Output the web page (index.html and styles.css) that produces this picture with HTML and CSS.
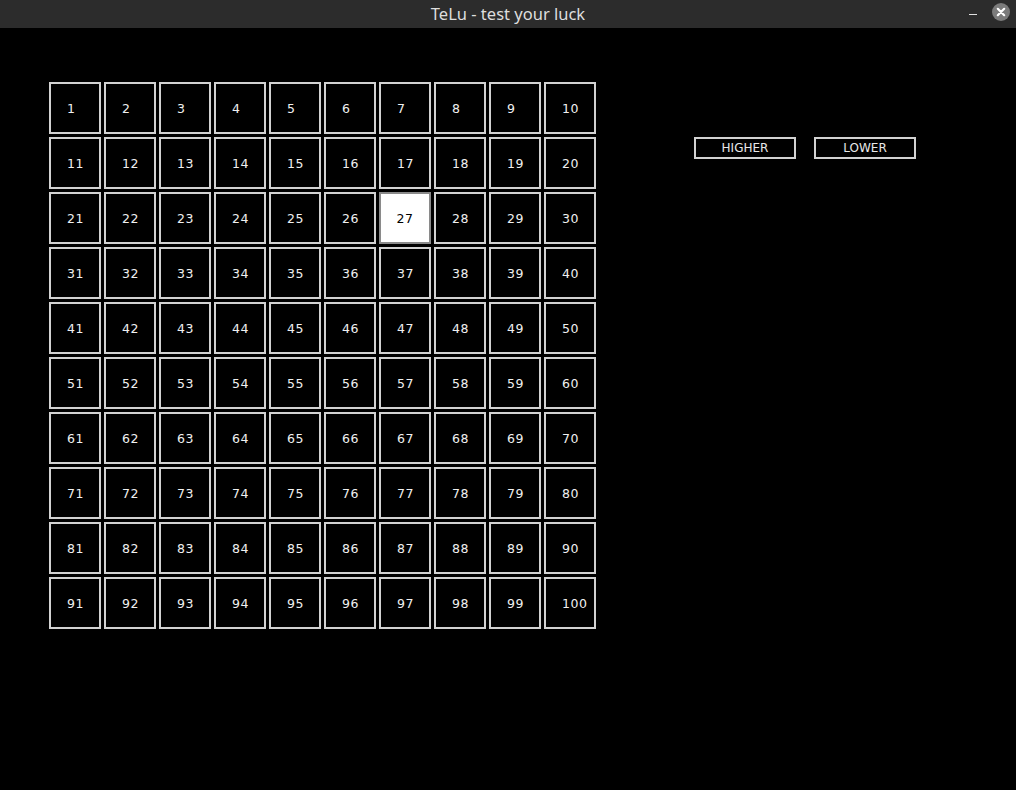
FILE: index.html
```html
<!DOCTYPE html>
<html lang="en">
<head>
    <meta charset="UTF-8">
    <title>TeLu - test your luck</title>
    <link rel="stylesheet" href="styles.css">
</head>
<body>
    <div class="titlebar">
        <span class="title">TeLu - test your luck</span>
        <span class="minimize"></span>
        <span class="close">
            <svg width="18" height="18" viewBox="0 0 18 18">
                <circle cx="9" cy="9" r="9" fill="#7b7b7b"/>
                <path d="M5.8 5.8 L12.2 12.2 M12.2 5.8 L5.8 12.2" stroke="#fff" stroke-width="2.2" stroke-linecap="round"/>
            </svg>
        </span>
    </div>
    <div class="content">
        <div class="grid" id="grid"></div>
        <div class="controls">
            <button class="btn">HIGHER</button>
            <button class="btn">LOWER</button>
        </div>
    </div>
    <script>
        var grid = document.getElementById('grid');
        for (var i = 1; i <= 100; i++) {
            var cell = document.createElement('div');
            cell.className = 'cell' + (i === 27 ? ' selected' : '');
            cell.textContent = i;
            grid.appendChild(cell);
        }
    </script>
</body>
</html>
```

FILE: styles.css
```css
body {
    margin: 0;
    padding: 0;
    background-color: #000;
    font-family: "DejaVu Sans", sans-serif;
    width: 1016px;
    height: 790px;
    overflow: hidden;
}
.titlebar {
    height: 28px;
    background-color: #2c2c2c;
    position: relative;
    display: flex;
    align-items: center;
    justify-content: center;
}
.title {
    font-family: "Noto Sans", sans-serif;
    font-size: 16.5px;
    color: #dedede;
    margin-top: -2px;
}
.minimize {
    position: absolute;
    left: 969px;
    top: 14px;
    width: 8px;
    height: 1px;
    background-color: #e0e0e0;
}
.close {
    position: absolute;
    left: 992px;
    top: 3px;
    width: 18px;
    height: 18px;
}
.content {
    display: flex;
    padding: 54px 0 0 49px;
}
.grid {
    display: grid;
    grid-template-columns: repeat(10, 52px);
    grid-auto-rows: 52px;
    gap: 3px;
}
.cell {
    box-sizing: border-box;
    border: 2px solid #d2d2d2;
    color: #f0f0f0;
    font-size: 12.5px;
    letter-spacing: 0.6px;
    display: flex;
    align-items: center;
    padding-left: 16px;
    padding-top: 1px;
}
.cell.selected {
    background-color: #fff;
    border-color: #8a8a8a;
    color: #000;
    justify-content: center;
    padding-left: 0;
}
.controls {
    display: flex;
    gap: 18px;
    margin: 55px 0 0 98px;
    align-items: flex-start;
}
.btn {
    box-sizing: border-box;
    width: 102px;
    height: 22px;
    background-color: #000;
    border: 2px solid #d2d2d2;
    color: #e8e8e8;
    font-family: "DejaVu Sans", sans-serif;
    font-size: 12px;
    padding: 0;
}
```
